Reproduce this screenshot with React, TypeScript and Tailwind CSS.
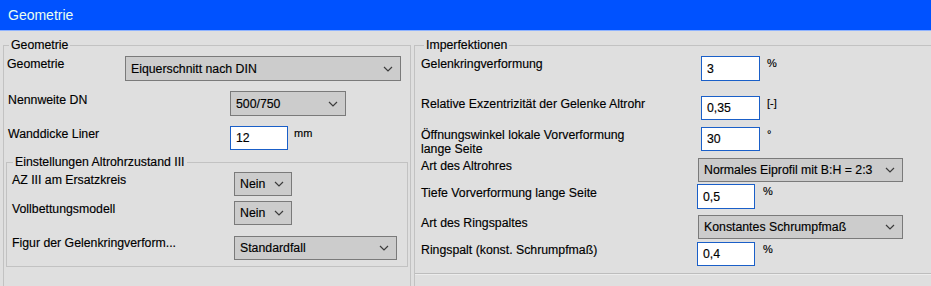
import { FC, ReactNode } from "react";

const Chevron: FC = () => (
  <svg width="10" height="6" viewBox="0 0 10 6" className="shrink-0">
    <path d="M1 1L5 5L9 1" fill="none" stroke="#3c3c3c" strokeWidth="1.2" />
  </svg>
);

const Combo: FC<{ value: string; w: string }> = ({ value, w }) => (
  <div
    className={`${w} h-full flex items-center justify-between border border-[#7a7a7a] bg-[#cccccc] pl-[5px] pr-[7px]`}
  >
    <span className="whitespace-nowrap">{value}</span>
    <Chevron />
  </div>
);

const Field: FC<{ value: string; w: string }> = ({ value, w }) => (
  <div className={`${w} h-full flex items-center border border-[#1a5fc8] bg-white pl-[5px]`}>
    {value}
  </div>
);

const Unit: FC<{ children: ReactNode; ml?: string }> = ({ children, ml = "ml-[7px]" }) => (
  <span className={`${ml} self-start text-[11px] leading-[14px]`}>{children}</span>
);

const Row: FC<{ className: string; label: ReactNode; labelClass: string; children: ReactNode }> = ({
  className,
  label,
  labelClass,
  children,
}) => (
  <div className={`flex ${className}`}>
    <div className={`shrink-0 self-start whitespace-nowrap ${labelClass}`}>{label}</div>
    {children}
  </div>
);

export default function App() {
  return (
    <div className="w-[931px] h-[286px] overflow-hidden bg-[#dfdfdf] font-['Liberation_Sans',Arial,sans-serif] text-[12.3px] leading-[14px] text-black [-webkit-text-stroke:0.15px_#000]">
      <div className="h-[30px] bg-[#0052ff] flex items-center pl-[8px] text-[14px] leading-[16px] text-[#eafff0] [-webkit-text-stroke:0]">
        Geometrie
      </div>
      <div className="h-px bg-[#8fb3ff]" />

      <div className="flex pt-[7px]">
        {/* left group */}
        <fieldset className="ml-[3px] w-[408px] h-[260px] shrink-0 border border-[#c2c2c2]">
          <legend className="ml-[5px] px-[2px]">Geometrie</legend>

          <Row className="mt-[4px] h-[25px]" labelClass="w-[121px] pl-[3px] pt-[1px]" label="Geometrie">
            <Combo value="Eiquerschnitt nach DIN" w="w-[276px]" />
          </Row>
          <Row className="mt-[10px] h-[25px]" labelClass="w-[226px] pl-[4px] pt-[2px]" label="Nennweite DN">
            <Combo value="500/750" w="w-[116px]" />
          </Row>
          <Row className="mt-[10px] h-[24px]" labelClass="w-[226px] pl-[4px] pt-[1px]" label="Wanddicke Liner">
            <Field value="12" w="w-[58px]" />
            <Unit ml="ml-[6px]">mm</Unit>
          </Row>

          <fieldset className="mt-[5px] mx-[2px] pb-[6px] border border-[#c2c2c2]">
            <legend className="ml-[6px] px-[2px]">Einstellungen Altrohrzustand III</legend>
            <Row className="mt-[3px] h-[24px]" labelClass="w-[227px] pl-[5px] pt-[1px]" label="AZ III am Ersatzkreis">
              <Combo value="Nein" w="w-[58px]" />
            </Row>
            <Row className="mt-[5px] h-[24px]" labelClass="w-[227px] pl-[5px] pt-[1px]" label="Vollbettungsmodell">
              <Combo value="Nein" w="w-[58px]" />
            </Row>
            <Row className="mt-[11px] h-[24px]" labelClass="w-[227px] pl-[5px]" label="Figur der Gelenkringverform...">
              <Combo value="Standardfall" w="w-[163px]" />
            </Row>
          </fieldset>
        </fieldset>

        {/* right group */}
        <fieldset className="ml-[3px] w-[530px] h-[260px] shrink-0 border border-[#c2c2c2]">
          <legend className="ml-[9px] px-[2px]">Imperfektionen</legend>

          <div className="flex flex-col border-b border-[#bdbdbd] pb-[7px]">
            <Row className="mt-[4px] h-[25px]" labelClass="w-[286px] pl-[6px] pt-[1px]" label="Gelenkringverformung">
              <Field value="3" w="w-[59px]" />
              <Unit>%</Unit>
            </Row>
            <Row
              className="mt-[15px] h-[24px]"
              labelClass="w-[286px] pl-[6px] pt-[1px]"
              label="Relative Exzentrizität der Gelenke Altrohr"
            >
              <Field value="0,35" w="w-[59px]" />
              <Unit>[-]</Unit>
            </Row>
            <Row
              className="mt-[7px] h-[24px]"
              labelClass="w-[286px] pl-[6px] pt-[2px] leading-[13.5px]"
              label={
                <>
                  Öffnungswinkel lokale Vorverformung
                  <br />
                  lange Seite
                </>
              }
            >
              <Field value="30" w="w-[59px]" />
              <Unit>°</Unit>
            </Row>
            <Row className="mt-[7px] h-[24px]" labelClass="w-[283px] pl-[6px] pt-[1px]" label="Art des Altrohres">
              <Combo value="Normales Eiprofil mit B:H = 2:3" w="w-[205px]" />
            </Row>
            <Row
              className="mt-[2px] h-[25px]"
              labelClass="w-[282px] pl-[6px] pt-[2px]"
              label="Tiefe Vorverformung lange Seite"
            >
              <Field value="0,5" w="w-[58px]" />
              <Unit ml="ml-[8px]">%</Unit>
            </Row>
            <Row className="mt-[6px] h-[24px]" labelClass="w-[283px] pl-[6px] pt-[1px]" label="Art des Ringspaltes">
              <Combo value="Konstantes Schrumpfmaß" w="w-[205px]" />
            </Row>
            <Row
              className="mt-[3px] h-[24px]"
              labelClass="w-[282px] pl-[6px] pt-[1px]"
              label="Ringspalt (konst. Schrumpfmaß)"
            >
              <Field value="0,4" w="w-[58px]" />
              <Unit ml="ml-[8px]">%</Unit>
            </Row>
          </div>
          <div className="h-px bg-[#ececec]" />
        </fieldset>
      </div>
    </div>
  );
}
